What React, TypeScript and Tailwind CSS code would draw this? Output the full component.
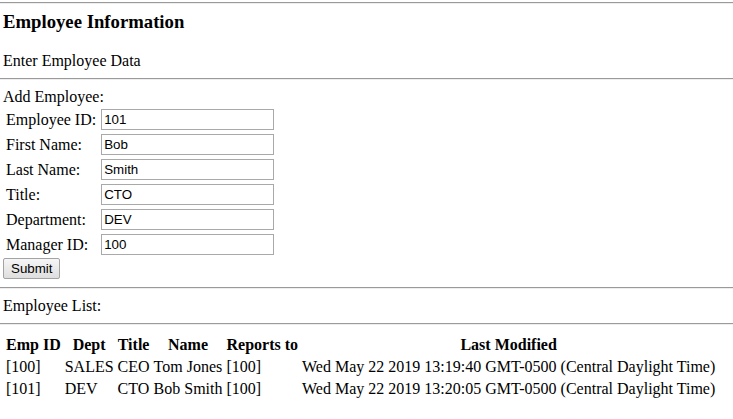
import React from "react";

const Hr = ({ className = "" }: { className?: string }) => (
  <div className={"h-[2px] w-full border-t border-b border-t-[#9a9a9a] border-b-[#eeeeee] " + className} />
);

const fields: [string, string][] = [
  ["Employee ID:", "101"],
  ["First Name:", "Bob"],
  ["Last Name:", "Smith"],
  ["Title:", "CTO"],
  ["Department:", "DEV"],
  ["Manager ID:", "100"],
];

const rows = [
  ["[100]", "SALES", "CEO", "Tom Jones", "[100]", "Wed May 22 2019 13:19:40 GMT-0500 (Central Daylight Time)"],
  ["[101]", "DEV", "CTO", "Bob Smith", "[100]", "Wed May 22 2019 13:20:05 GMT-0500 (Central Daylight Time)"],
];

export default function App() {
  return (
    <div className="min-h-[419px] w-[733px] bg-white text-black font-['Liberation_Serif','Times_New_Roman',serif] text-[16px] leading-[normal]">
      <Hr className="mt-[2px]" />
      <div className="pl-[3px]">
        <h3 className="mt-[7px] text-[18.72px] font-bold leading-[normal]">Employee Information</h3>
        <div className="mt-[19px]">Enter Employee Data</div>
      </div>
      <Hr className="my-[8px]" />
      <div className="pl-[3px]">
        <div>Add Employee:</div>
        <table className="border-separate border-spacing-[2px]">
          <tbody>
            {fields.map(([label, value]) => (
              <tr key={label}>
                <td className="py-[1px] pl-[1px] pr-[2px] align-middle whitespace-nowrap">{label}</td>
                <td className="p-[1px]">
                  <input
                    type="text"
                    defaultValue={value}
                    className="block h-[21px] w-[173px] border border-[#a9a9a9] bg-white px-[2px] font-['Liberation_Sans',Arial,sans-serif] text-[13.33px] leading-[normal] text-black outline-none"
                  />
                </td>
              </tr>
            ))}
          </tbody>
        </table>
        <button className="block h-[21px] rounded-[2px] border border-[#a3a3a3] bg-gradient-to-b from-[#f6f6f6] to-[#dedede] px-[7px] font-['Liberation_Sans',Arial,sans-serif] text-[13.33px] leading-none text-black">
          Submit
        </button>
      </div>
      <Hr className="my-[8px]" />
      <div className="pl-[3px]">Employee List:</div>
      <Hr className="my-[8px]" />
      <div className="pl-[3px]">
        <table className="border-separate border-spacing-[2px]">
          <thead>
            <tr>
              {["Emp ID", "Dept", "Title", "Name", "Reports to", "Last Modified"].map((h) => (
                <th key={h} className="p-[1px] text-center font-bold whitespace-nowrap">
                  {h}
                </th>
              ))}
            </tr>
          </thead>
          <tbody>
            {rows.map((r) => (
              <tr key={r[0]}>
                {r.map((c, i) => (
                  <td key={i} className="p-[1px] text-left whitespace-nowrap">
                    {c}
                  </td>
                ))}
              </tr>
            ))}
          </tbody>
        </table>
      </div>
    </div>
  );
}
